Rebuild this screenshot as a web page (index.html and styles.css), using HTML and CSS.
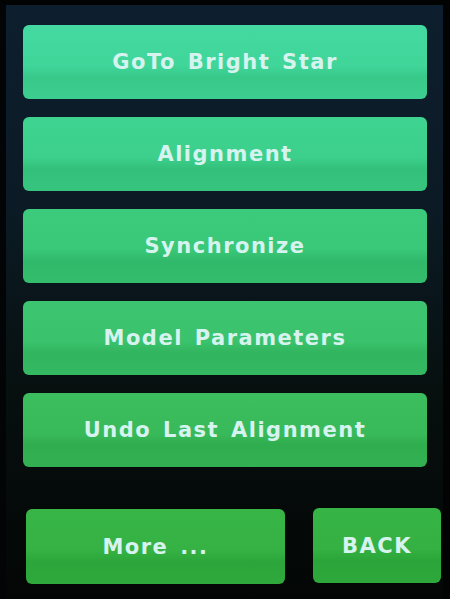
FILE: index.html
```html
<!DOCTYPE html>
<html>
<head>
<meta charset="utf-8">
<link rel="stylesheet" href="styles.css">
</head>
<body>
<div class="screen">
  <div class="menu">
    <div class="btn b1">GoTo Bright Star</div>
    <div class="btn b2">Alignment</div>
    <div class="btn b3">Synchronize</div>
    <div class="btn b4">Model Parameters</div>
    <div class="btn b5">Undo Last Alignment</div>
  </div>
  <div class="bottom">
    <div class="btn b6 more">More ...</div>
    <div class="btn b7 back">BACK</div>
  </div>
</div>
</body>
</html>
```
FILE: styles.css
```css
html, body {
  margin: 0;
  padding: 0;
  background: #020303;
}
.screen {
  width: 450px;
  height: 599px;
  box-sizing: border-box;
  border-top: 5px solid #020303;
  border-left: 6px solid #030405;
  border-right: 7px solid #020303;
  background: linear-gradient(180deg, #0d1e2e 0%, #0b1a24 35%, #07100f 65%, #030605 100%);
  display: flex;
  flex-direction: column;
  font-family: "DejaVu Sans", sans-serif;
  font-weight: bold;
}
.menu {
  display: flex;
  flex-direction: column;
  gap: 18px;
  padding: 20px 0 0 17px;
}
.btn {
  height: 74px;
  border-radius: 6px;
  display: flex;
  align-items: center;
  justify-content: center;
  color: #d6f3ef;
  font-size: 21px;
  letter-spacing: 1.5px;
  word-spacing: 3px;
  box-sizing: border-box;
}
.menu .btn {
  width: 404px;
}
.b1 { background: linear-gradient(180deg, #44d9a0 0%, #40d69a 55%, #38c98a 70%, #3ccd90 100%); }
.b2 { background: linear-gradient(180deg, #3fd391 0%, #3cd08c 55%, #33c07a 70%, #37c47f 100%); }
.b3 { background: linear-gradient(180deg, #3ccb7c 0%, #39c877 55%, #30b96a 70%, #33bd6c 100%); }
.b4 { background: linear-gradient(180deg, #3dc470 0%, #3ac26c 55%, #31b55e 70%, #34b861 100%); }
.b5 { background: linear-gradient(180deg, #3cbd5e 0%, #39ba5a 55%, #30ad4e 70%, #33b051 100%); }
.b6 { background: linear-gradient(180deg, #37b546 0%, #35b243 55%, #2ca63a 70%, #2fa93c 100%); }
.b7 { background: linear-gradient(180deg, #36b445 0%, #34b142 55%, #2ba539 70%, #2ea83b 100%); }
.bottom {
  display: flex;
  gap: 28px;
  padding: 42px 0 0 20px;
}
.more {
  width: 259px;
  height: 75px;
}
.back {
  width: 128px;
  height: 75px;
  margin-top: -1px;
}
```
